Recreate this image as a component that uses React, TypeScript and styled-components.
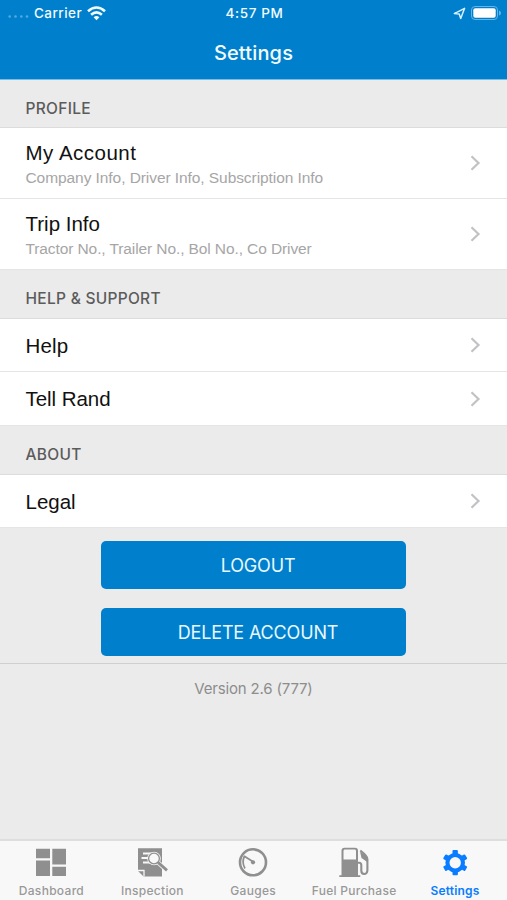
import React from "react";
import styled, { createGlobalStyle } from "styled-components";

const GlobalStyle = createGlobalStyle`
  * { box-sizing: border-box; }
  body { margin: 0; background: #ebebeb; }
`;

const sf = `Inter, "Liberation Sans", sans-serif`;
const helvetica = `"Liberation Sans", Arial, sans-serif`;

const Screen = styled.div`
  width: 507px;
  height: 900px;
  display: flex;
  flex-direction: column;
  overflow: hidden;
  background: #ebebeb;
  font-family: ${sf};
`;

const Header = styled.header`
  height: 80px;
  flex: none;
  background: #0080cc;
  border-bottom: 1px solid #76bee4;
  color: #f2fbff;
`;

const StatusBar = styled.div`
  height: 26px;
  display: grid;
  grid-template-columns: 1fr auto 1fr;
  align-items: center;
  padding: 0 6px 0 8px;
  font-size: 13.5px;
  font-weight: 500;
  line-height: 26px;
`;

const StatusGroup = styled.div<{ $end?: boolean }>`
  display: flex;
  align-items: center;
  gap: ${(p) => (p.$end ? 5 : 0)}px;
  justify-content: ${(p) => (p.$end ? "flex-end" : "flex-start")};
  height: 26px;
`;

const Carrier = styled.span`
  margin: 0 5px 0 5px;
  letter-spacing: 0.45px;
`;

const Clock = styled.span`
  letter-spacing: 0.6px;
`;

const Title = styled.h1`
  margin: 0;
  height: 53px;
  line-height: 55px;
  text-align: center;
  font-size: 20px;
  font-weight: 500;
  letter-spacing: 0.15px;
`;

const SectionHeader = styled.h2`
  margin: 0;
  height: 49px;
  flex: none;
  padding: 9px 25.5px 0;
  border-bottom: 1px solid #dcdcdc;
  line-height: 39px;
  font-size: 15.5px;
  font-weight: 500;
  color: #5b5b5c;
  letter-spacing: 0.28px;
`;

const FirstSectionHeader = styled(SectionHeader)`
  height: 48px;
`;

const List = styled.div`
  flex: none;
  background: #fff;
`;

const Row = styled.div<{ $height: number }>`
  height: ${(p) => p.$height}px;
  display: flex;
  align-items: center;
  justify-content: space-between;
  padding: 0 26px 0 25.5px;
  border-bottom: 1px solid #e5e5e5;
  font-family: ${helvetica};
`;

const RowText = styled.div`
  display: flex;
  flex-direction: column;
  gap: 1px;
  padding-top: 2px;
`;

const RowTitle = styled.span<{ $spacing: number }>`
  font-size: 20.5px;
  line-height: 26px;
  padding-top: 1px;
  color: #111;
  letter-spacing: ${(p) => p.$spacing}px;
`;

const RowDetail = styled.span<{ $spacing: number }>`
  font-size: 15.5px;
  line-height: 22px;
  color: #a6a6a6;
  letter-spacing: ${(p) => p.$spacing}px;
`;

const Actions = styled.div`
  height: 136px;
  flex: none;
  display: flex;
  flex-direction: column;
  align-items: center;
  gap: 19px;
  padding-top: 13px;
  border-bottom: 1px solid #cecfd0;
`;

const ActionButton = styled.button`
  width: 305px;
  height: 48px;
  padding: 2px 0 0 9px;
  border: 0;
  border-radius: 5px;
  background: #0080cc;
  color: #e9f8ff;
  font-family: ${sf};
  font-size: 18px;
  line-height: 46px;
  letter-spacing: -0.15px;
`;

const Version = styled.p`
  margin: 0;
  flex: 1;
  padding-top: 15px;
  text-align: center;
  font-size: 15px;
  line-height: 20px;
  color: #8d8d8d;
  letter-spacing: -0.17px;
`;

const TabBar = styled.nav`
  height: 61px;
  flex: none;
  display: grid;
  grid-template-columns: repeat(5, 100.9px);
  padding-left: 1px;
  background: #f8f8f8;
  border-top: 2px solid #dedede;
`;

const Tab = styled.div<{ $active?: boolean }>`
  display: flex;
  flex-direction: column;
  align-items: center;
  padding-top: 6px;
  gap: 4px;
  white-space: nowrap;
  font-size: 12px;
  font-weight: ${(p) => (p.$active ? 600 : 500)};
  line-height: 16px;
  letter-spacing: ${(p) => (p.$active ? 0.15 : 0.3)}px;
  color: ${(p) => (p.$active ? "#0a7cff" : "#999")};
  svg { flex: none; color: ${(p) => (p.$active ? "#0a7cff" : "#8f8f8f")}; }
`;

const SignalDots = () => (
  <svg width="21" height="9" viewBox="0 0 21 9" fill="#55a9df">
    <circle cx="1.7" cy="7.5" r="1.3" /><circle cx="7.5" cy="7.5" r="1.3" />
    <circle cx="13.3" cy="7.5" r="1.3" /><circle cx="19" cy="7.5" r="1.3" />
  </svg>
);

const Wifi = () => (
  <svg width="19" height="15" viewBox="0 0 19 15" fill="none" stroke="#f2fbff" strokeWidth="2.6">
    <path d="M1 5.3Q9.5-2.3 18 5.3M4.1 8.7Q9.5 4 14.9 8.7" />
    <path d="M6.6 11.3Q9.5 8.9 12.4 11.3L9.5 14.2Z" fill="#f2fbff" stroke="none" />
  </svg>
);

const LocationArrow = () => (
  <svg width="13" height="13" viewBox="0 0 13 13" fill="none" stroke="#d8f0fc" strokeWidth="1.5" strokeLinejoin="round">
    <path d="M1.3 6.6 11.6 1.3 7.7 11.4 6.2 7Z" />
  </svg>
);

const Battery = () => (
  <svg width="30" height="14" viewBox="0 0 30 14">
    <rect x=".5" y=".5" width="26" height="13" rx="3.5" fill="none" stroke="#67b3e2" />
    <rect x="2.3" y="2.3" width="22.4" height="9.4" rx="2" fill="#fff" />
    <path d="M28 4.5Q30 5 30 7T28 9.5Z" fill="#67b3e2" />
  </svg>
);

const Chevron = () => (
  <svg width="11" height="16" viewBox="0 0 11 16" fill="none" stroke="#c2c2c5" strokeWidth="2.2">
    <path d="M1.5 1.3 8.5 8 1.5 14.7" />
  </svg>
);

const DashboardIcon = () => (
  <svg width="32" height="32" viewBox="0 0 32 32" fill="currentColor">
    <path d="M1 1.7h14v9.6H1zM17.3 1.7H31v15.8H17.3zM1 13.5h14V29H1zM17.3 19.8H31V29H17.3z" />
  </svg>
);

const InspectionIcon = () => (
  <svg width="32" height="32" viewBox="0 0 32 32">
    <path d="M2 1.2H26V29.5H7.5L2 24Z" fill="currentColor" />
    <path d="M2 23.5h6v6" fill="none" stroke="#f8f8f8" strokeWidth="1.3" />
    <path d="M7 6.5h8M5.5 11h8M7 15.5h8" stroke="#f8f8f8" strokeWidth="1.8" />
    <circle cx="18" cy="11.5" r="6.8" fill="#f8f8f8" />
    <circle cx="18" cy="11.5" r="5.4" fill="#f8f8f8" stroke="currentColor" strokeWidth="1.3" />
    <path d="m22.3 15.6 8.7 8" stroke="#f8f8f8" strokeWidth="4.4" />
    <path d="m22 15.4 9 8" stroke="currentColor" strokeWidth="2.8" />
  </svg>
);

const GaugeIcon = () => (
  <svg width="32" height="32" viewBox="0 0 32 32" fill="none" stroke="currentColor">
    <circle cx="16" cy="15.3" r="13" strokeWidth="2.6" />
    <path d="M8 21.5Q4.3 15 7.6 9" strokeWidth="1.7" />
    <path d="m7 9 9.5 6" strokeWidth="1.8" />
    <circle cx="16" cy="15.3" r="2.1" fill="currentColor" stroke="none" />
  </svg>
);

const FuelIcon = () => (
  <svg width="32" height="32" viewBox="0 0 32 32">
    <path d="M3.5 28.3V3.7Q3.5.8 6.5.8H17Q20 .8 20 3.7V28.3H22.3V30H1.3V28.3Z" fill="currentColor" />
    <path d="M5.5 4Q5.5 2.6 7 2.6H16.5Q18 2.6 18 4V12.5H5.5Z" fill="#f8f8f8" />
    <path d="M20 15.7h1.2Q23.3 15.7 23.3 18.2V23.5Q23.3 27 26.2 27T29.4 23.5V12Q29.4 9 22.3 3.5" fill="none" stroke="currentColor" strokeWidth="2.1" />
    <path d="m22 4.5 1.5 6.5 5.7 4V9.5Z" fill="currentColor" />
  </svg>
);

const SettingsIcon = () => (
  <svg width="32" height="32" viewBox="0 0 32 32">
    <g fill="currentColor" transform="translate(16.2 15.7)">
      <circle r="9.8" />
      <rect x="-2.7" y="-12.6" width="5.4" height="25.2" rx="1" />
      <rect x="-2.7" y="-12.6" width="5.4" height="25.2" rx="1" transform="rotate(60)" />
      <rect x="-2.7" y="-12.6" width="5.4" height="25.2" rx="1" transform="rotate(120)" />
    </g>
    <circle cx="16.2" cy="15.7" r="5.7" fill="#f8f8f8" />
  </svg>
);

export default function App() {
  return (
    <>
      <GlobalStyle />
      <Screen>
        <Header>
          <StatusBar>
            <StatusGroup><SignalDots /><Carrier>Carrier</Carrier><Wifi /></StatusGroup>
            <Clock>4:57 PM</Clock>
            <StatusGroup $end><LocationArrow /><Battery /></StatusGroup>
          </StatusBar>
          <Title>Settings</Title>
        </Header>
        <FirstSectionHeader>PROFILE</FirstSectionHeader>
        <List>
          <Row $height={71}>
            <RowText>
              <RowTitle $spacing={0.5}>My Account</RowTitle>
              <RowDetail $spacing={-0.07}>Company Info, Driver Info, Subscription Info</RowDetail>
            </RowText>
            <Chevron />
          </Row>
          <Row $height={71}>
            <RowText>
              <RowTitle $spacing={0}>Trip Info</RowTitle>
              <RowDetail $spacing={-0.1}>Tractor No., Trailer No., Bol No., Co Driver</RowDetail>
            </RowText>
            <Chevron />
          </Row>
        </List>
        <SectionHeader>HELP &amp; SUPPORT</SectionHeader>
        <List>
          <Row $height={53}><RowTitle $spacing={0.15}>Help</RowTitle><Chevron /></Row>
          <Row $height={54}><RowTitle $spacing={-0.05}>Tell Rand</RowTitle><Chevron /></Row>
        </List>
        <SectionHeader>ABOUT</SectionHeader>
        <List>
          <Row $height={53}><RowTitle $spacing={0}>Legal</RowTitle><Chevron /></Row>
        </List>
        <Actions>
          <ActionButton>LOGOUT</ActionButton>
          <ActionButton>DELETE ACCOUNT</ActionButton>
        </Actions>
        <Version>Version 2.6 (777)</Version>
        <TabBar>
          <Tab><DashboardIcon />Dashboard</Tab>
          <Tab><InspectionIcon />Inspection</Tab>
          <Tab><GaugeIcon />Gauges</Tab>
          <Tab><FuelIcon />Fuel Purchase</Tab>
          <Tab $active><SettingsIcon />Settings</Tab>
        </TabBar>
      </Screen>
    </>
  );
}
